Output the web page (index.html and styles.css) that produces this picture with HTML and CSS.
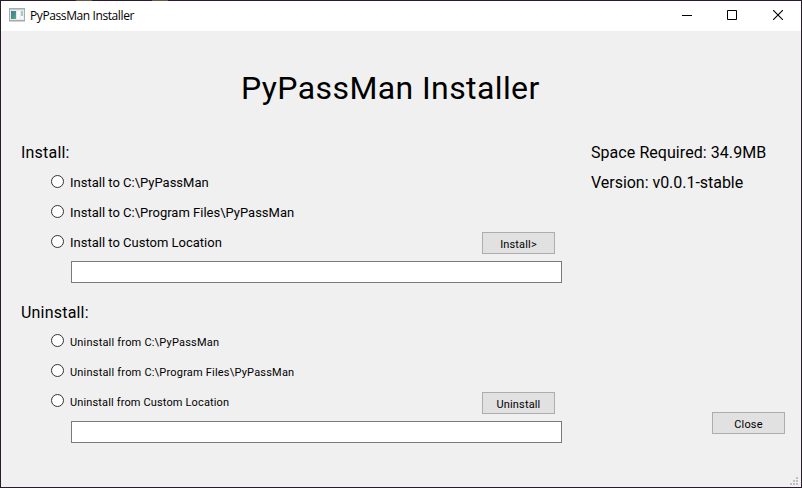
FILE: index.html
```
<!DOCTYPE html>
<html lang="en">
<head>
<meta charset="utf-8">
<title>PyPassMan Installer</title>
<link rel="stylesheet" href="styles.css">
</head>
<body>
<div class="window">
  <header class="titlebar">
    <svg class="app-icon" width="16" height="14" viewBox="0 0 16 14" shape-rendering="crispEdges">
      <defs><linearGradient id="pane" x1="0" y1="0" x2="1" y2="1"><stop offset="0" stop-color="#4878a8"/><stop offset=".55" stop-color="#43958a"/><stop offset="1" stop-color="#65ad7e"/></linearGradient></defs>
      <rect x=".5" y=".5" width="15" height="12" fill="#e9ebed" stroke="#a6abb0"/>
      <rect x="1" y="1" width="14" height="1" fill="#c5cbd2"/>
      <rect x="2" y="3" width="5" height="8" fill="url(#pane)"/>
      <rect x="8" y="3" width="3" height="8" fill="#fafafa"/>
      <rect x="12" y="3" width="2" height="5" fill="#a9c9bd"/>
      <rect x="12" y="8" width="2" height="3" fill="#fafafa"/>
      <rect x="0" y="13" width="16" height="1" fill="#d0d2d4"/>
    </svg>
    <span class="caption">PyPassMan Installer</span>
    <div class="controls">
      <svg width="10" height="10" viewBox="0 0 10 10"><path d="M0 5.5H10" stroke="#000"/></svg>
      <svg width="10" height="10" viewBox="0 0 10 10"><path d="M.5 .5H9.5V9.5H.5Z" fill="none" stroke="#000"/></svg>
      <svg width="10" height="10" viewBox="0 0 10 10"><path d="M0 0L10 10M10 0L0 10" stroke="#000" stroke-width="1.1"/></svg>
    </div>
  </header>
  <main class="content">
    <h1 class="title">PyPassMan Installer</h1>
    <div class="columns">
      <div class="forms">
        <section class="group install">
          <h2 class="heading">Install:</h2>
          <label class="option"><i class="radio"></i><span>Install to C:\PyPassMan</span></label>
          <label class="option"><i class="radio"></i><span>Install to C:\Program Files\PyPassMan</span></label>
          <div class="option"><i class="radio"></i><span>Install to Custom Location</span><button class="button">Install&gt;</button></div>
          <input class="path" type="text" aria-label="Install location">
        </section>
        <section class="group uninstall">
          <h2 class="heading">Uninstall:</h2>
          <label class="option"><i class="radio"></i><span>Uninstall from C:\PyPassMan</span></label>
          <label class="option"><i class="radio"></i><span>Uninstall from C:\Program Files\PyPassMan</span></label>
          <div class="option"><i class="radio"></i><span class="custom">Uninstall from Custom Location</span><button class="button">Uninstall</button></div>
          <input class="path" type="text" aria-label="Uninstall location">
        </section>
      </div>
      <aside class="side">
        <p class="info">Space Required: 34.9MB</p>
        <p class="info version">Version: v0.0.1-stable</p>
        <button class="button close">Close</button>
      </aside>
    </div>
  </main>
  <svg class="grip" width="8" height="8" viewBox="0 0 8 8" fill="#bfbfbf" shape-rendering="crispEdges"><path d="M6 0h2v2h-2zM3 3h2v2h-2zM6 3h2v2h-2zM0 6h2v2h-2zM3 6h2v2h-2zM6 6h2v2h-2z"/></svg>
</div>
</body>
</html>
```

FILE: styles.css
```
* { box-sizing: border-box; }
body { margin: 0; font-family: Roboto, "Liberation Sans", sans-serif; color: #000; }
.window {
  position: relative;
  width: 802px;
  height: 488px;
  border: 1px solid #2a1a2e;
  background: #f0f0f0;
}
.window::before {
  content: "";
  position: absolute;
  top: -1px;
  left: 75px;
  width: 92px;
  height: 1px;
  background: linear-gradient(90deg, #6b5840 16px, transparent 16px 76px, #6b5840 76px);
}
.titlebar { display: flex; align-items: center; height: 30px; padding: 0 18px 0 8px; background: #fff; }
.app-icon { margin-top: -3px; }
.caption { margin-left: 5px; font: 12px/16px "Open Sans", sans-serif; letter-spacing: -0.4px; white-space: nowrap; }
.controls { display: flex; gap: 36px; margin: -2px 0 0 auto; }
.controls svg { display: block; }
.controls svg:first-child { margin-right: -1px; }
.title { height: 106px; margin: 0; padding: 37px 0 0 240px; font-size: 32px; font-weight: 400; line-height: 40px; letter-spacing: 0.4px; }
.columns { display: flex; }
.forms { width: 561px; padding-left: 20px; }
.group { height: 160px; }
.heading { margin: 0; font-size: 16px; font-weight: 400; line-height: 31px; height: 30px; letter-spacing: 0.2px; }
.option { display: flex; align-items: center; height: 30px; padding: 0 7px 0 30px; font-size: 13px; white-space: nowrap; }
.option span { margin-left: 6px; padding-top: 1px; }
.uninstall .option { font-size: 11px; letter-spacing: 0.2px; }
.uninstall .custom { letter-spacing: 0.14px; }
.radio { flex: none; width: 13px; height: 13px; margin-top: -1px; border: 1px solid #333; border-radius: 50%; background: #fff; }
.uninstall .radio { margin-top: -3px; }
.button { width: 73px; height: 22px; margin: 2px 0 0 auto; padding: 3px 0 0; border: 1px solid #adadad; background: #e1e1e1; color: #000; font: 11px/16px Roboto, sans-serif; letter-spacing: 0.15px; }
.path { display: block; width: 491px; height: 22px; margin: 4px 0 0 50px; border: 1px solid #7a7a7a; background: #fff; outline: 0; }
.side { display: flex; flex-direction: column; width: 239px; height: 297px; padding: 0 16px 0 29px; }
.info { margin: 0; height: 30px; font-size: 16px; line-height: 31px; letter-spacing: 0.06px; white-space: nowrap; }
.version { letter-spacing: -0.03px; }
.close { margin: auto 0 0 auto; }
.grip { position: absolute; right: 3px; bottom: 2px; }
```
